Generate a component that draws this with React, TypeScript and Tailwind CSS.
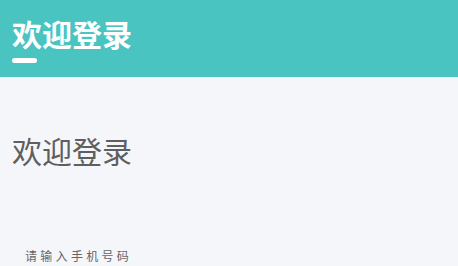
export default function App() {
  return (
    <div
      className="min-h-[266px] w-full bg-[#f5f6fa]"
      style={{ fontFamily: '"Noto Sans CJK SC", "Noto Sans", sans-serif' }}
    >
      {/* Header */}
      <div className="h-[77px] bg-[#4ac4c1] px-3 pt-[15px]">
        <h1 className="text-[30px] font-bold leading-[36px] text-white">欢迎登录</h1>
        <div className="mt-[7px] h-[5px] w-[25px] rounded-full bg-white" />
      </div>

      {/* Body */}
      <div className="px-3 pt-[55px]">
        <h2 className="text-[30px] leading-[36px] text-[#5f5f5f]">欢迎登录</h2>
        <div className="mt-[79px] pl-[13px] text-[12px] tracking-[3.3px] text-[#666]">请输入手机号码</div>
      </div>
    </div>
  )
}
